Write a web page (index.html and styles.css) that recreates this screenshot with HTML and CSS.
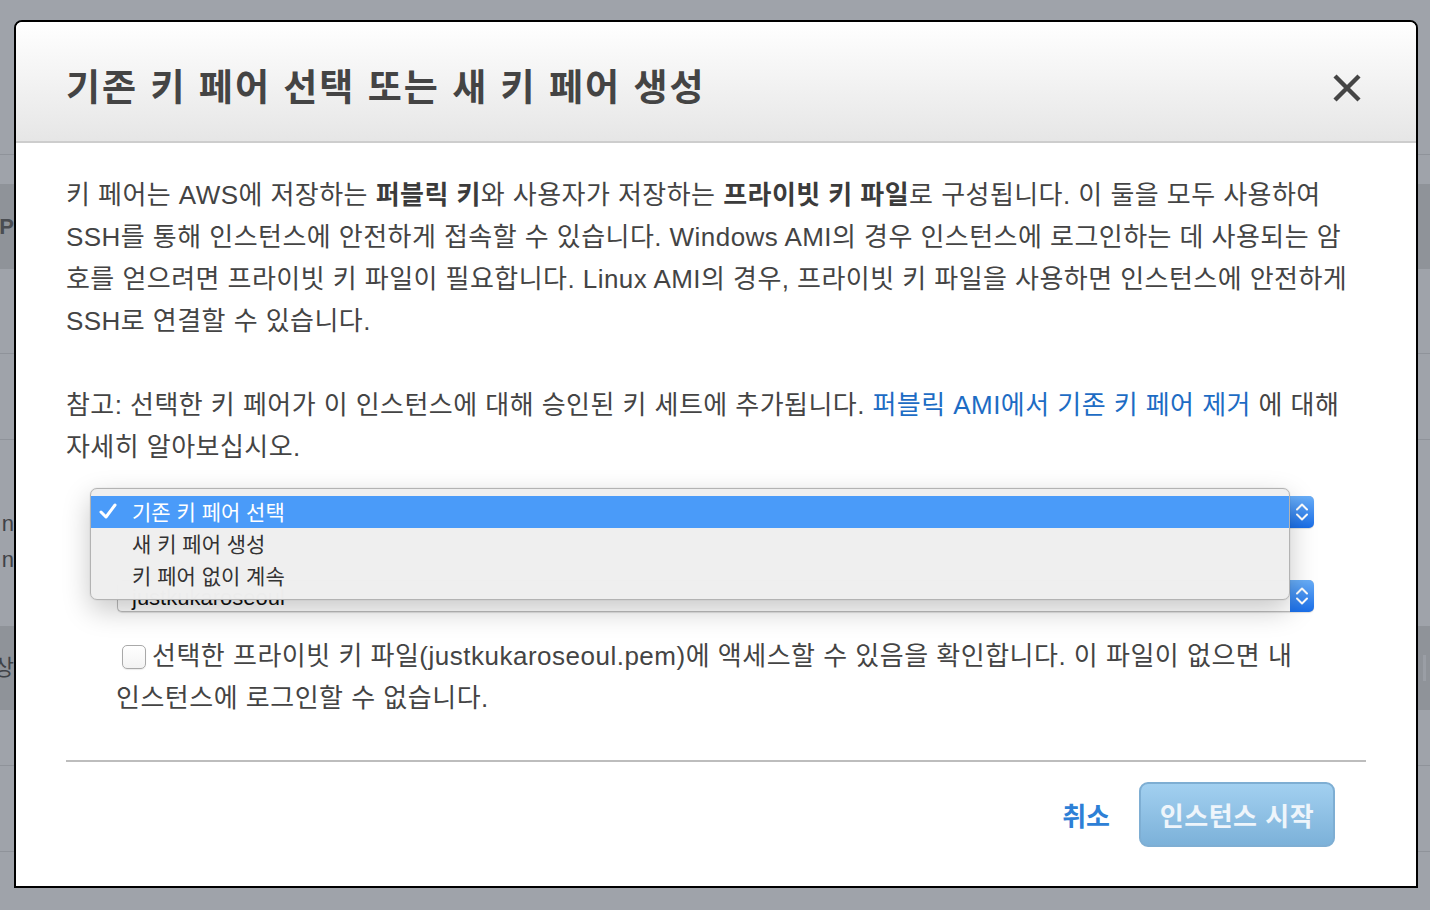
FILE: index.html
```html
<!DOCTYPE html>
<html lang="ko">
<head>
<meta charset="utf-8">
<title>키 페어</title>
<link rel="stylesheet" href="styles.css">
</head>
<body>
<div class="backdrop">
  <div class="bg-row h155 line"></div>
  <div class="bg-row h28"></div>
  <div class="bg-row h85 dark"><span class="edge bold">P</span></div>
  <div class="bg-row h85 line"></div>
  <div class="bg-row h86 line"></div>
  <div class="bg-row h186 stack"><span class="edge">n</span><span class="edge">n</span></div>
  <div class="bg-row h84 dark"><span class="edge">상</span><span class="edge-r"></span></div>
  <div class="bg-row h56 line"></div>
  <div class="bg-row h86 line"></div>
  <div class="bg-row h58"></div>
</div>

<div class="modal">
  <div class="modal-header">
    <h1 class="modal-title">기존 키 페어 선택 또는 새 키 페어 생성</h1>
    <button class="close" aria-label="닫기">
      <svg width="30" height="30" viewBox="0 0 30 30"><path d="M3 3 L27 27 M27 3 L3 27" stroke="#454545" stroke-width="4.4" stroke-linecap="butt" fill="none"/></svg>
    </button>
  </div>
  <div class="modal-body">
    <p class="para">키 페어는 AWS에 저장하는 <b>퍼블릭 키</b>와 사용자가 저장하는 <b>프라이빗 키 파일</b>로 구성됩니다. 이 둘을 모두 사용하여<br>SSH를 통해 인스턴스에 안전하게 접속할 수 있습니다. Windows AMI의 경우 인스턴스에 로그인하는 데 사용되는 암<br>호를 얻으려면 프라이빗 키 파일이 필요합니다. Linux AMI의 경우, 프라이빗 키 파일을 사용하면 인스턴스에 안전하게<br>SSH로 연결할 수 있습니다.</p>
    <p class="para gap">참고: 선택한 키 페어가 이 인스턴스에 대해 승인된 키 세트에 추가됩니다. <a class="link" href="#">퍼블릭 AMI에서 기존 키 페어 제거</a> 에 대해<br>자세히 알아보십시오.</p>

    <div class="selects">
      <div class="select first">
        <span class="sel-text"></span>
        <span class="stepper"><svg width="24" height="32" viewBox="0 0 24 32"><path d="M7 13.5 L12 8.5 L17 13.5 M7 18.5 L12 23.5 L17 18.5" stroke="#fff" stroke-width="2" fill="none" stroke-linecap="round" stroke-linejoin="round"/></svg></span>
      </div>
      <div class="select second">
        <span class="sel-text low">justkukaroseoul</span>
        <span class="stepper"><svg width="24" height="32" viewBox="0 0 24 32"><path d="M7 13.5 L12 8.5 L17 13.5 M7 18.5 L12 23.5 L17 18.5" stroke="#fff" stroke-width="2" fill="none" stroke-linecap="round" stroke-linejoin="round"/></svg></span>
      </div>
      <ul class="popup">
        <li class="opt selected"><svg class="check" width="18" height="16" viewBox="0 0 18 16"><path d="M2 9 L7 14 L16 2" stroke="#fff" stroke-width="3" fill="none" stroke-linecap="round" stroke-linejoin="round"/></svg>기존 키 페어 선택</li>
        <li class="opt">새 키 페어 생성</li>
        <li class="opt">키 페어 없이 계속</li>
      </ul>
    </div>

    <p class="ack"><span class="checkbox"></span>선택한 프라이빗 키 파일(justkukaroseoul.pem)에 액세스할 수 있음을 확인합니다. 이 파일이 없으면 내<br>인스턴스에 로그인할 수 없습니다.</p>

    <hr class="divider">

    <div class="footer">
      <a class="cancel" href="#">취소</a>
      <button class="launch">인스턴스 시작</button>
    </div>
  </div>
</div>
</body>
</html>
```

FILE: styles.css
```css
html, body {
  margin: 0;
  padding: 0;
}

body {
  width: 1430px;
  height: 910px;
  overflow: hidden;
  position: relative;
  background: #9fa3aa;
  font-family: "Liberation Sans", "Noto Sans CJK KR", sans-serif;
}

/* ---------- backdrop (page behind the modal) ---------- */
.backdrop {
  display: flex;
  flex-direction: column;
}

.bg-row {
  display: flex;
  justify-content: space-between;
  align-items: center;
  box-sizing: border-box;
  background: #9fa3aa;
}

.bg-row.line { border-bottom: 1px solid #8f939a; }
.bg-row.dark { background: #8f9399; }
.bg-row.stack {
  flex-direction: column;
  align-items: flex-start;
  justify-content: flex-start;
  padding-top: 72px;
  gap: 12px;
}

.h155 { height: 155px; }
.h28 { height: 29px; }
.h85 { height: 85px; }
.h86 { height: 86px; }
.h186 { height: 186px; }
.h84 { height: 84px; }
.h56 { height: 56px; }
.h58 { height: 58px; }

.edge {
  width: 14px;
  overflow: hidden;
  display: flex;
  justify-content: flex-end;
  white-space: nowrap;
  color: #3f4247;
  font-size: 22px;
  line-height: 24px;
}
.edge.bold { font-weight: 700; color: #4a4d52; }

.edge-r {
  width: 3px;
  height: 26px;
  margin-right: 4px;
  background: #9a9ea5;
}

/* ---------- modal ---------- */
.modal {
  position: absolute;
  left: 14px;
  top: 20px;
  width: 1404px;
  box-sizing: border-box;
  border: 2px solid #000;
  border-radius: 8px 8px 0 0;
  background: #fff;
  overflow: hidden;
}

.modal-header {
  height: 121px;
  box-sizing: border-box;
  display: flex;
  align-items: center;
  justify-content: space-between;
  padding: 6px 54px 0 50px;
  background: linear-gradient(#ffffff, #e6e6e6);
  border-bottom: 2px solid #cdcdcd;
}

.modal-title {
  margin: 0;
  font-family: "Noto Sans CJK KR", sans-serif;
  font-weight: 700;
  font-size: 37px;
  line-height: 44px;
  color: #444;
  letter-spacing: 2px;
}

.close {
  border: 0;
  background: none;
  padding: 0;
  width: 30px;
  height: 30px;
  display: flex;
  align-items: center;
  justify-content: center;
  margin-top: 6px;
}

.modal-body {
  padding: 31px 50px 39px 50px;
  color: #444;
}

.para {
  margin: 0;
  font-size: 26px;
  line-height: 42px;
  letter-spacing: 0.45px;
  white-space: nowrap;
}
.para b { font-weight: 700; color: #3b3b3b; }
.para.gap { margin-top: 42px; }

.link {
  color: #1d6cc4;
  text-decoration: none;
}

/* ---------- selects ---------- */
.selects {
  position: relative;
  margin: 28px 52px 0 51px;
}

.select {
  height: 32px;
  box-sizing: border-box;
  display: flex;
  align-items: center;
  justify-content: space-between;
  border: 1px solid #bdbdbd;
  border-right: 0;
  border-radius: 5px;
  background: #fff;
  box-shadow: 0 1px 1px rgba(0, 0, 0, 0.12);
  font-size: 22px;
  color: #111;
}
.select.second { margin-top: 52px; }

.sel-text { padding-left: 14px; }
.sel-text.low { padding-top: 4px; }

.stepper {
  width: 24px;
  height: 32px;
  margin: -1px 0;
  border-radius: 0 5px 5px 0;
  background: linear-gradient(#69aef8, #1a6ee8);
  display: flex;
}

.popup {
  position: absolute;
  left: -27px;
  top: -8px;
  width: 1200px;
  box-sizing: border-box;
  margin: 0;
  padding: 7px 0;
  list-style: none;
  background: rgba(239, 239, 239, 0.99);
  border: 1px solid #b3b3b3;
  border-radius: 7px;
  box-shadow: 0 10px 28px rgba(0, 0, 0, 0.22), 0 0 1px rgba(0, 0, 0, 0.3);
}

.opt {
  height: 32px;
  box-sizing: border-box;
  display: flex;
  align-items: center;
  padding: 0 0 3px 41px;
  font-size: 21px;
  color: #333;
  position: relative;
}
.opt.selected {
  background: #4a9bf9;
  color: #fff;
}
.check {
  position: absolute;
  left: 8px;
  top: 7px;
}

/* ---------- acknowledgement ---------- */
.ack {
  margin: 23px 0 0 50px;
  font-size: 26px;
  line-height: 42px;
  letter-spacing: 0.5px;
  white-space: nowrap;
}

.checkbox {
  display: inline-block;
  width: 22px;
  height: 22px;
  margin: 0 6px 0 6px;
  vertical-align: -4px;
  border: 1px solid #a9a9a9;
  border-radius: 5px;
  background: linear-gradient(#ffffff, #f3f3f3);
  box-shadow: 0 1px 1px rgba(0, 0, 0, 0.08);
}

.divider {
  margin: 41px 0 0 0;
  border: 0;
  height: 2px;
  background: #bdbdbd;
}

/* ---------- footer ---------- */
.footer {
  margin-top: 20px;
  display: flex;
  justify-content: flex-end;
  align-items: center;
  gap: 29px;
  padding-right: 31px;
}

.cancel {
  font-family: "Noto Sans CJK KR", sans-serif;
  font-weight: 700;
  font-size: 26px;
  color: #2d80d6;
  text-decoration: none;
}

.launch {
  width: 196px;
  height: 65px;
  box-sizing: border-box;
  border: 2px solid #7eaed3;
  border-radius: 9px;
  background: linear-gradient(#a2d0f0, #7cb1d9);
  font-family: "Noto Sans CJK KR", sans-serif;
  font-weight: 700;
  font-size: 26px;
  letter-spacing: 0.5px;
  color: #eef5fb;
  padding: 0;
}
```
